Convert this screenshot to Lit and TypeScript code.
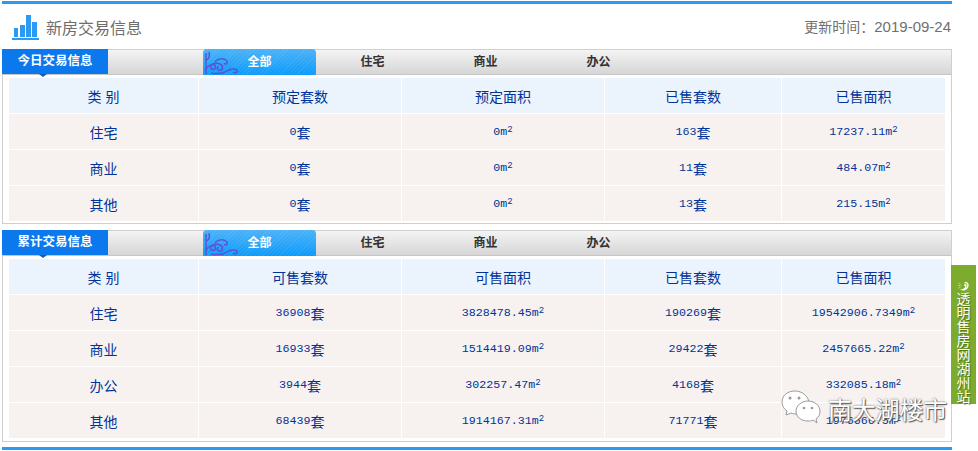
import { LitElement, html, css, svg } from "lit";
import { customElement } from "lit/decorators.js";

type Row = [string, string, string, string, string];

const todayRows: Row[] = [
  ["住宅", "0", "0", "163", "17237.11"],
  ["商业", "0", "0", "11", "484.07"],
  ["其他", "0", "0", "13", "215.15"],
];
const totalRows: Row[] = [
  ["住宅", "36908", "3828478.45", "190269", "19542906.7349"],
  ["商业", "16933", "1514419.09", "29422", "2457665.22"],
  ["办公", "3944", "302257.47", "4168", "332085.18"],
  ["其他", "68439", "1914167.31", "71771", "1976666.5"],
];

const swirl = svg`<svg class="swirl" width="36" height="26" viewBox="0 0 36 26" fill="none" stroke="#5a55d8" stroke-width="1.5">
  <path d="M3 25V4M3 11C6 10 7 7 6 3" />
  <path d="M2 22C5 15 13 13 17 15C21 17 20 22 16 21C13 20 14 17 16 18" />
  <path d="M8 24C13 25 19 25 24 22C27 20 32 19 34 21C35 23 32 25 30 23" />
  <path d="M12 13C15 9 21 9 24 12C25 15 22 16 21 14" />
  <circle cx="10" cy="18" r="2.4" />
</svg>`;

@customElement("app-root")
export class AppRoot extends LitElement {
  static styles = css`
    :host {
      display: block;
      position: relative;
      width: 978px;
      height: 451px;
      overflow: hidden;
      background: #fff;
      font-family: "Liberation Sans", "Noto Sans CJK SC", sans-serif;
    }
    .page {
      width: 950px;
      margin-left: 2px;
      padding-top: 1px;
    }
    .bar {
      height: 3px;
      background: #2b9af3;
    }
    .top {
      height: 45px;
      display: flex;
      justify-content: space-between;
      align-items: center;
      box-sizing: border-box;
      padding: 1px 1px 0 10px;
    }
    .title {
      display: flex;
      align-items: center;
      gap: 7px;
      font-size: 16px;
      color: #6e6e6e;
    }
    .date {
      font-size: 14px;
      color: #707070;
      margin-top: -2px;
    }
    .date b {
      font-weight: 400;
      font-size: 15px;
    }
    .card {
      border: 1px solid #cfcfcf;
      height: 175px;
      box-sizing: border-box;
      margin-bottom: 6px;
    }
    .card.tall {
      height: 212px;
      margin-bottom: 5px;
    }
    .head {
      position: relative;
      height: 25px;
      display: flex;
      padding-left: 200px;
      background: linear-gradient(#f4f4f4, #ececec 25%, #d6d6d6);
      border-bottom: 1px solid #c6c6c6;
      box-sizing: border-box;
      margin-top: 0;
    }
    .badge {
      position: absolute;
      left: -1px;
      top: -1px;
      width: 106px;
      height: 25px;
      background: #0b78ee;
      color: #fff;
      font-weight: 700;
      font-size: 12.5px;
      line-height: 25px;
      text-align: center;
    }
    .badge::after {
      content: "";
      position: absolute;
      left: 37px;
      top: 25px;
      border: 4px solid transparent;
      border-top: 3px solid #0b5fb5;
      border-bottom: 0;
    }
    .tab {
      position: relative;
      width: 113px;
      height: 25px;
      line-height: 25px;
      text-align: center;
      font-size: 12px;
      font-weight: 700;
      color: #333;
      flex: none;
    }
    .tab.on {
      height: 26px;
      margin-top: -1px;
      line-height: 27px;
      color: #fff;
      border-radius: 4px 4px 0 0;
      background: repeating-linear-gradient(135deg, rgba(255, 255, 255, 0.07) 0 1px, rgba(255, 255, 255, 0) 1px 3px),
        linear-gradient(#4cb2f6, #0c9bfb);
    }
    .swirl {
      position: absolute;
      left: 0;
      bottom: 0;
    }
    .grid {
      display: grid;
      grid-template-columns: 189px 202px 202px 176px 163px;
      gap: 1px;
      margin: 3px 0 0 6px;
      width: 936px;
      color: #003399;
      font-size: 14px;
    }
    .grid div {
      height: 35px;
      display: flex;
      align-items: center;
      justify-content: center;
      background: #f7f2f0;
    }
    .grid div.th {
      background: #ebf4fc;
    }
    .num {
      font-family: "Liberation Mono", monospace;
      font-size: 11.67px;
    }
    sup {
      font-family: "Liberation Mono", monospace;
      font-size: 9px;
      line-height: 0;
      position: relative;
      top: -2px;
      vertical-align: baseline;
    }
    .side {
      position: absolute;
      left: 951px;
      top: 265px;
      width: 25px;
      height: 139px;
      background: #7dab2d;
      color: #fff;
      font-size: 14px;
      line-height: 14px;
      text-align: center;
      display: flex;
      flex-direction: column;
      align-items: center;
      padding-top: 16px;
      box-sizing: border-box;
      text-shadow: 1px 1px 1px #4d6d17;
    }
    .side svg {
      margin-bottom: 1px;
    }
    .mark {
      position: absolute;
      left: 781px;
      top: 389px;
      display: flex;
      align-items: center;
      gap: 7px;
      color: #fff;
      font-size: 24px;
      text-shadow: 0 0 2px #555, 1px 1px 1px #555;
    }
    .mark span {
      letter-spacing: -0.2px;
      margin-top: 2px;
    }
  `;

  private tabs() {
    return html`
      <div class="tab on">${swirl}全部</div>
      <div class="tab">住宅</div>
      <div class="tab">商业</div>
      <div class="tab">办公</div>
    `;
  }

  private num(v: string, unit: string) {
    return html`<div>
      <span class="num">${v}</span>${unit === "m" ? html`<span class="num">m</span><sup>2</sup>` : "套"}
    </div>`;
  }

  private table(heads: string[], rows: Row[]) {
    return html`<div class="grid">
      ${heads.map((h) => html`<div class="th">${h}</div>`)}
      ${rows.map(
        (r) => html`<div>${r[0]}</div>
          ${this.num(r[1], "t")}${this.num(r[2], "m")}${this.num(r[3], "t")}${this.num(r[4], "m")}`
      )}
    </div>`;
  }

  render() {
    return html`
      <div class="page">
        <div class="bar"></div>
        <div class="top">
          <div class="title">
            <svg width="27" height="25" viewBox="0 0 27 25" fill="#2b9af3">
              <rect x="2" y="13" width="4" height="9" />
              <rect x="8" y="10" width="5" height="12" />
              <rect x="14" y="0" width="5" height="22" />
              <rect x="20" y="7" width="5" height="15" />
              <rect x="0" y="23" width="27" height="2" />
            </svg>
            新房交易信息
          </div>
          <div class="date">更新时间：<b>2019-09-24</b></div>
        </div>
        <div class="card">
          <div class="head"><div class="badge">今日交易信息</div>${this.tabs()}</div>
          ${this.table(["类 别", "预定套数", "预定面积", "已售套数", "已售面积"], todayRows)}
        </div>
        <div class="card tall">
          <div class="head"><div class="badge">累计交易信息</div>${this.tabs()}</div>
          ${this.table(["类 别", "可售套数", "可售面积", "已售套数", "已售面积"], totalRows)}
        </div>
        <div class="bar"></div>
      </div>
      <div class="side">
        <svg width="17" height="15" viewBox="0 0 17 15" fill="none" stroke="#fff" stroke-width="2">
          <path d="M10 3C14 1 16 5 15 8C14 12 10 14 7 13C11 12 13 9 12 6C11 5 10 6 10 7" />
          <path d="M1 3L4 5M0 7H4M1 11L4 9" stroke-width="1" stroke="#dfe9c8" />
        </svg>
        <span>透</span><span>明</span><span>售</span><span>房</span><span>网</span><span>湖</span><span>州</span><span>站</span>
      </div>
      <div class="mark">
        <svg width="40" height="36" viewBox="0 0 40 36" stroke="#9a9a9a" stroke-width="1" fill="#fff">
          <path d="M14 1C6 1 1 6 1 12C1 16 3 19 6 21L5 25L10 23C12 24 15 24 17 24L28 12C27 6 21 1 14 1Z" />
          <path d="M27 11C20 11 15 16 15 21C15 27 20 31 27 31C29 31 30 31 32 30L36 33L35 29C38 27 39 24 39 21C39 16 34 11 27 11Z" />
          <g fill="#9a9a9a" stroke="none">
            <circle cx="9" cy="8" r="1.5" /><circle cx="18" cy="8" r="1.5" />
            <circle cx="23" cy="18" r="1.3" /><circle cx="31" cy="18" r="1.3" />
          </g>
        </svg>
        <span>南大湖楼市</span>
      </div>
    `;
  }
}
